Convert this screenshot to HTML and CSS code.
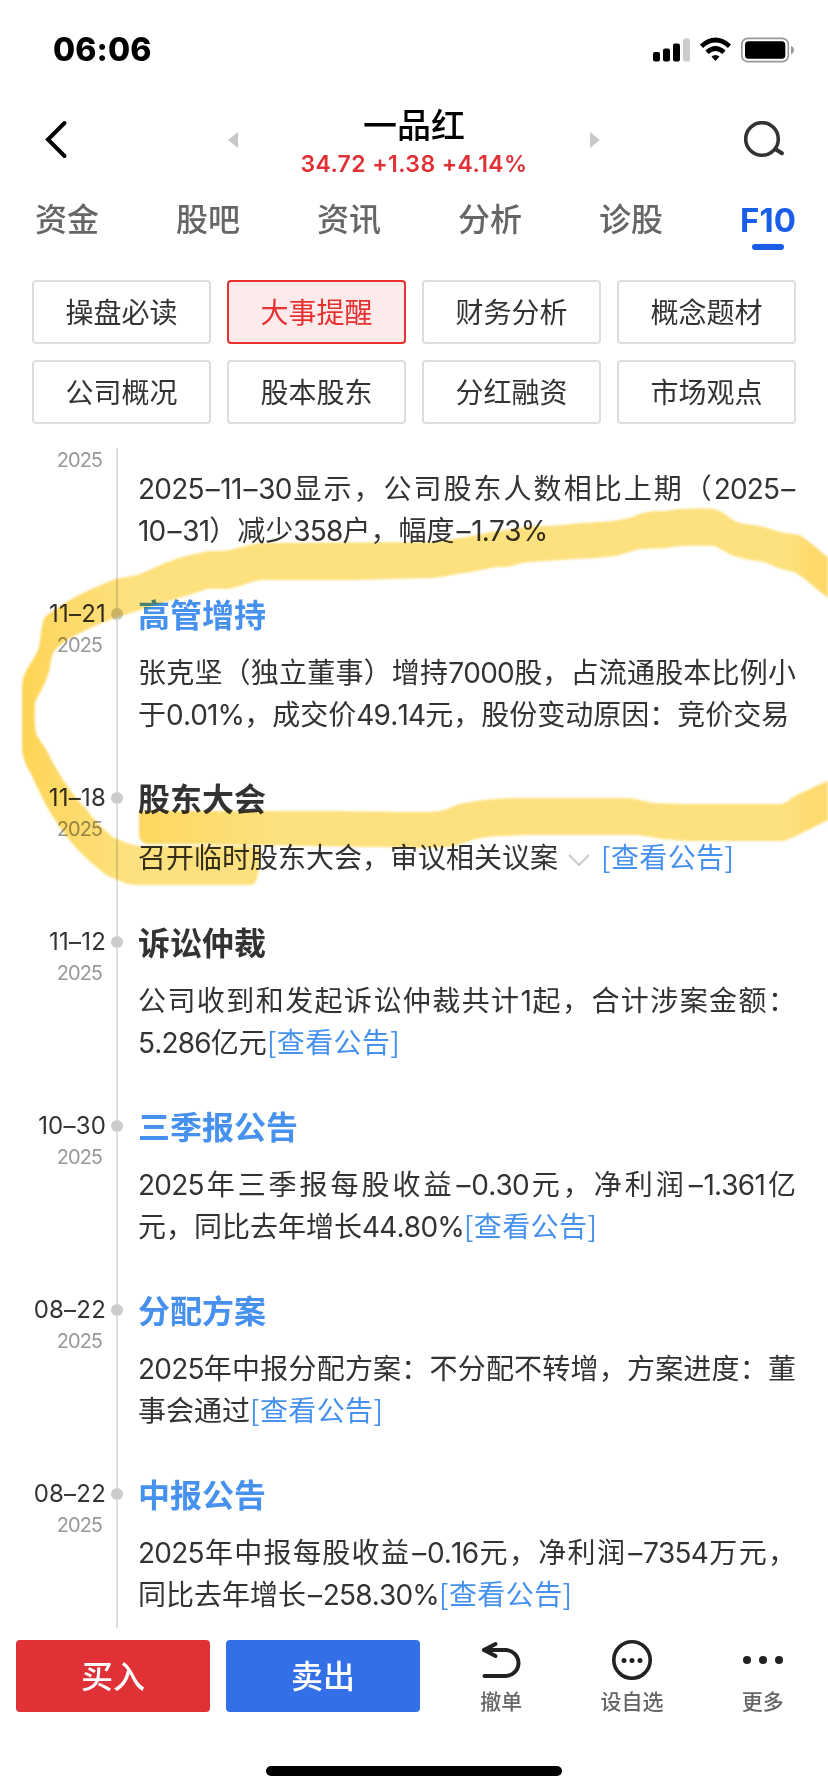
FILE: index.html
```
<!DOCTYPE html>
<html lang="zh-CN">
<head>
    <meta charset="UTF-8">
    <meta name="viewport" content="width=device-width, initial-scale=1.0">
    <title>一品红 - F10</title>
    <link rel="stylesheet" href="styles.css">
</head>
<body>
    <!-- Status bar -->
    <div class="status-bar">
        <div class="clock">06:06</div>
        <svg class="status-icons" width="142" height="26" viewBox="0 0 142 26">
            <rect x="0" y="15" width="7" height="9.5" rx="2"/>
            <rect x="10" y="11.500" width="7" height="13" rx="2"/>
            <rect x="20" y="6.500" width="7" height="18" rx="2"/>
            <rect x="30" y="1.500" width="7" height="23" rx="2" fill="#ccc"/>
            <path d="M48.500 9.200Q62.500 -3 76.500 9.200" fill="none" stroke="#000" stroke-width="4.800"/>
            <path d="M54 15.200Q62.500 7.600 71 15.200" fill="none" stroke="#000" stroke-width="4.800"/>
            <path d="M58.500 19.600Q62.500 16.400 66.500 19.600L62.500 24Z"/>
            <rect x="88.800" y="1.300" width="46.500" height="23.400" rx="6" fill="none" stroke="#999" stroke-width="1.700"/>
            <rect x="92" y="4.300" width="40.300" height="17.400" rx="3.500"/>
            <path d="M138 9q3 1 3 4t-3 4z" fill="#999"/>
        </svg>
    </div>

    <!-- Header -->
    <div class="header">
        <svg class="back" width="24" height="40" viewBox="0 0 24 40">
            <path d="M20.500 3L4 19.500L20.500 36" fill="none" stroke="#000" stroke-width="4" stroke-linecap="round"/>
        </svg>
        <svg width="10" height="16" viewBox="0 0 10 16"><path d="M10 0v16L0 8z" fill="#c8c8c8"/></svg>
        <div class="stock">
            <div class="stock-name">一品红</div>
            <div class="stock-price">34.72 +1.38 +4.14%</div>
        </div>
        <svg width="10" height="16" viewBox="0 0 10 16"><path d="M0 0v16l10-8z" fill="#c8c8c8"/></svg>
        <svg class="search" width="42" height="38" viewBox="0 0 42 38">
            <circle cx="18" cy="18" r="16.300" fill="none" stroke="#333" stroke-width="3.600"/>
            <path d="M32 28.500L38 32.300" stroke="#333" stroke-width="4" stroke-linecap="round"/>
        </svg>
    </div>

    <!-- Tabs -->
    <div class="tabs">
        <div class="tab">资金</div>
        <div class="tab">股吧</div>
        <div class="tab">资讯</div>
        <div class="tab">分析</div>
        <div class="tab">诊股</div>
        <div class="tab active">F10</div>
    </div>

    <!-- Section buttons -->
    <div class="sections">
        <div class="section">操盘必读</div>
        <div class="section active">大事提醒</div>
        <div class="section">财务分析</div>
        <div class="section">概念题材</div>
        <div class="section">公司概况</div>
        <div class="section">股本股东</div>
        <div class="section">分红融资</div>
        <div class="section">市场观点</div>
    </div>

    <!-- Timeline -->
    <div class="timeline">
        <div class="event event-cut">
            <div class="date"><div class="year">2025</div></div>
            <div class="content">
                <div class="line full"><span class="num">2025<i>–</i>11<i>–</i>30</span>显示，公司股东人数相比上期（<span class="num">2025<i>–</i></span></div>
                <div class="line"><span class="num">10<i>–</i>31</span>）减少<span class="num">358</span>户，幅度<span class="num"><i>–</i>1.73%</span></div>
            </div>
        </div>
        <div class="event">
            <div class="date"><div class="day">11–21</div><div class="year">2025</div></div>
            <div class="dot"></div>
            <div class="content">
                <div class="title blue">高管增持</div>
                <div class="line full">张克坚（独立董事）增持<span class="num">7000</span>股，占流通股本比例小</div>
                <div class="line">于<span class="num">0.01%</span>，成交价<span class="num">49.14</span>元，股份变动原因：竞价交易</div>
            </div>
        </div>
        <div class="event">
            <div class="date"><div class="day">11–18</div><div class="year">2025</div></div>
            <div class="dot"></div>
            <div class="content">
                <div class="title">股东大会</div>
                <div class="line tall">召开临时股东大会，审议相关议案<svg class="expand" width="24" height="14" viewBox="0 0 24 14"><path d="M2 2l10 10L22 2" fill="none" stroke="#ccc" stroke-width="2"/></svg><a class="link">[查看公告]</a></div>
            </div>
        </div>
        <div class="event">
            <div class="date"><div class="day">11–12</div><div class="year">2025</div></div>
            <div class="dot"></div>
            <div class="content">
                <div class="title">诉讼仲裁</div>
                <div class="line full">公司收到和发起诉讼仲裁共计<span class="num">1</span>起，合计涉案金额：</div>
                <div class="line"><span class="num">5.286</span>亿元<a class="link">[查看公告]</a></div>
            </div>
        </div>
        <div class="event">
            <div class="date"><div class="day">10–30</div><div class="year">2025</div></div>
            <div class="dot"></div>
            <div class="content">
                <div class="title blue">三季报公告</div>
                <div class="line full"><span class="num">2025</span>年三季报每股收益<span class="num"><i>–</i>0.30</span>元，净利润<span class="num"><i>–</i>1.361</span>亿</div>
                <div class="line">元，同比去年增长<span class="num">44.80%</span><a class="link">[查看公告]</a></div>
            </div>
        </div>
        <div class="event">
            <div class="date"><div class="day">08–22</div><div class="year">2025</div></div>
            <div class="dot"></div>
            <div class="content">
                <div class="title blue">分配方案</div>
                <div class="line full"><span class="num">2025</span>年中报分配方案：不分配不转增，方案进度：董</div>
                <div class="line">事会通过<a class="link">[查看公告]</a></div>
            </div>
        </div>
        <div class="event">
            <div class="date"><div class="day">08–22</div><div class="year">2025</div></div>
            <div class="dot"></div>
            <div class="content">
                <div class="title blue">中报公告</div>
                <div class="line full"><span class="num">2025</span>年中报每股收益<span class="num"><i>–</i>0.16</span>元，净利润<span class="num"><i>–</i>7354</span>万元，</div>
                <div class="line">同比去年增长<span class="num"><i>–</i>258.30%</span><a class="link">[查看公告]</a></div>
            </div>
        </div>
    </div>

    <!-- Bottom bar -->
    <div class="bottom-bar">
        <div class="trade buy">买入</div>
        <div class="trade sell">卖出</div>
        <div class="actions">
            <div class="action">
                <svg width="40" height="40" viewBox="0 0 40 40" fill="none" stroke="#222" stroke-width="4" stroke-linecap="round" stroke-linejoin="round">
                    <path d="M3 10H24.500A13 13 0 0 1 24.500 36H3.500"/>
                    <path d="M14.500 4L3 10L14.500 16"/>
                </svg>
                <span>撤单</span>
            </div>
            <div class="action">
                <svg width="40" height="40" viewBox="0 0 40 40" fill="#222">
                    <circle cx="20" cy="20" r="18.200" fill="none" stroke="#222" stroke-width="3.600"/>
                    <circle cx="12" cy="20.500" r="2.500"/><circle cx="20" cy="20.500" r="2.500"/><circle cx="28" cy="20.500" r="2.500"/>
                </svg>
                <span>设自选</span>
            </div>
            <div class="action">
                <svg width="40" height="40" viewBox="0 0 40 40" fill="#222">
                    <circle cx="4" cy="20" r="4"/><circle cx="20" cy="20" r="4"/><circle cx="36" cy="20" r="4"/>
                </svg>
                <span>更多</span>
            </div>
        </div>
    </div>
    <div class="home-indicator"></div>

    <!-- Marker drawn over the timeline -->
    <svg class="marker" width="828" height="1792" viewBox="0 0 828 1792">
        <defs>
            <linearGradient id="ring" gradientUnits="userSpaceOnUse" x1="0" y1="0" x2="828" y2="0">
                <stop offset="0.03" stop-color="#fdd555"/>
                <stop offset="0.07" stop-color="#fdd967"/>
                <stop offset="0.16" stop-color="#fde17f"/>
                <stop offset="0.95" stop-color="#fde17f"/>
                <stop offset="0.98" stop-color="#fdd96a"/>
            </linearGradient>
            <linearGradient id="bar" gradientUnits="userSpaceOnUse" x1="139" y1="0" x2="828" y2="0">
                <stop offset="0" stop-color="#fdd860"/>
                <stop offset="0.2" stop-color="#fde17f"/>
                <stop offset="0.94" stop-color="#fde17f"/>
                <stop offset="0.98" stop-color="#fddb6e"/>
            </linearGradient>
        </defs>
        <path fill="url(#ring)" d="M832 561C820 551 808 540 801 536C795 533 788 534 781 532L764 527C754 524 745 525 737 522C730 519 724 511 714 509C702 508 690 509 677 509C667 512 657 510 647 512C638 514 632 518 624 519C610 522 596 522 581 523C568 524 555 526 541 526C524 526 508 530 491 532C476 535 462 538 447 540C435 543 424 542 414 542L263 543C252 543 243 547 233 549C223 552 213 550 203 552C192 555 182 556 173 560C160 564 149 571 137 575L115 579C104 584 93 588 83 593C72 598 60 606 50 613C45 616 43 619 43 623C40 632 41 642 38 650C34 659 29 665 25 673C22 680 22 686 22 693V747C22 754 24 761 27 767C32 774 36 785 40 793C48 810 57 824 67 837C77 850 89 861 100 870C106 876 113 878 120 881C126 884 132 885 138 885H252C257 885 260 869 261 849C252 845 242 846 234 846H138C128 844 120 840 113 837C103 829 94 820 87 810C78 801 70 790 63 780C58 771 52 762 48 753C45 746 38 739 36 733C34 723 35 713 35 703C38 694 45 686 47 677C51 669 50 661 53 653C56 648 61 644 67 640C81 632 96 625 110 620C123 615 137 611 150 607C169 601 190 595 207 589C216 588 225 590 233 588C243 586 253 580 263 580H353L431 578C442 578 453 574 464 573C478 572 490 566 504 567C514 567 521 562 531 562L561 560C579 558 597 559 614 556C623 555 632 550 641 549L667 548C683 545 698 546 714 546C721 548 727 554 734 556C744 560 756 560 767 563C776 568 785 570 794 572C804 577 816 589 832 601Z"/>
        <path fill="url(#bar)" d="M139 811H333C360 811 387 812 414 812C424 812 435 812 444 810C450 808 457 804 464 803C480 800 497 798 514 798H627C636 798 645 802 654 803L687 804H782C788 802 794 795 801 793L832 779V818L794 837L784 841H687L661 839C651 837 641 835 631 835H521C507 836 494 836 481 838C469 840 459 846 447 847C418 849 389 847 367 847C294 846 220 844 147 844Q139 842 139 835Z"/>
    </svg>
</body>
</html>
```
FILE: styles.css
```
* {
    box-sizing: border-box;
}
body {
    position: relative;
    width: 828px;
    height: 1792px;
    margin: 0;
    overflow: hidden;
    background-color: #fff;
    color: #333;
    font-family: "Noto Sans CJK SC", sans-serif;
}
svg {
    display: block;
    flex: none;
}

/* Status bar */
.status-bar {
    display: flex;
    justify-content: space-between;
    align-items: center;
    height: 92px;
    padding: 7px 33px 0 53px;
    color: #000;
}
.clock {
    font-family: Inter, sans-serif;
    font-size: 32px;
    font-weight: 800;
    letter-spacing: 0.1px;
}

/* Header */
.header {
    display: grid;
    grid-template-columns: 228px 10px 352px 10px 228px;
    align-items: center;
    height: 96px;
}
.back {
    margin-left: 44px;
}
.search {
    margin-left: 144px;
}
.stock {
    text-align: center;
}
.stock-name {
    padding-top: 1px;
    color: #000;
    font-size: 34px;
    font-weight: 500;
    line-height: 44px;
}
.stock-price {
    padding-top: 2px;
    color: #e03236;
    font-family: Inter, sans-serif;
    font-size: 23px;
    font-weight: 600;
    letter-spacing: 0.4px;
    line-height: 32px;
}

/* Tabs */
.tabs {
    display: flex;
    justify-content: space-between;
    height: 62px;
    padding: 0 32px 0 35px;
}
.tab {
    color: #666;
    font-size: 32px;
    font-weight: 500;
    line-height: 59px;
}
.tab.active {
    position: relative;
    color: #1a5ee8;
    font-family: Inter, sans-serif;
    font-size: 33px;
    font-weight: 700;
    line-height: 64px;
}
.tab.active::after {
    content: "";
    position: absolute;
    left: 50%;
    bottom: 0;
    width: 32px;
    height: 6px;
    margin-left: -16px;
    border-radius: 3px;
    background-color: #1a5ee8;
}

/* Section buttons */
.sections {
    display: grid;
    grid-template-columns: repeat(4, 1fr);
    gap: 16px;
    padding: 30px 32px 24px;
}
.section {
    height: 64px;
    border: 2px solid #ddd;
    border-radius: 4px;
    font-size: 28px;
    line-height: 58px;
    text-align: center;
}
.section.active {
    border-color: #e93030;
    background-color: #fdeaeb;
    color: #e93030;
}

/* Timeline */
.timeline {
    height: 1180px;
    overflow: hidden;
    background: linear-gradient(#ddd, #ddd) 116px 0 / 2px 100% no-repeat;
}
.event {
    display: flex;
    padding-bottom: 41px;
}
.date {
    width: 106px;
    font-family: Inter, sans-serif;
    text-align: right;
}
.day {
    height: 44px;
    font-size: 24px;
    font-kerning: none;
    letter-spacing: 0.2px;
    line-height: 44px;
}
.year {
    padding-right: 4px;
    color: #999;
    font-size: 20px;
    letter-spacing: -1px;
    line-height: 18px;
}
.dot {
    width: 12px;
    height: 12px;
    margin: 16px 0 0 5px;
    border-radius: 50%;
    background-color: #ccc;
}
.content {
    width: 658px;
    margin: -1px 0 1px 15px;
}
.title {
    margin-bottom: 15px;
    font-size: 32px;
    font-weight: 700;
    line-height: 44px;
}
.title.blue {
    color: #4691ee;
}
.line {
    height: 42px;
    font-size: 28px;
    line-height: 42px;
    white-space: nowrap;
}
.line.full {
    text-align: justify;
    text-align-last: justify;
}
.line.tall {
    height: 44px;
    line-height: 44px;
}
.num {
    font-family: Inter, sans-serif;
    font-kerning: none;
    letter-spacing: -0.8px;
}
.num i {
    padding: 0 1.5px 0 2px;
    font-style: normal;
}
.link {
    color: #4691ee;
    letter-spacing: 0.4px;
}
.expand {
    display: inline-block;
    margin: 0 10px 0 9px;
    vertical-align: 1px;
}
.event-cut {
    padding-top: 3px;
}
.event-cut .content {
    margin: 15px 0 1px 32px;
}

/* Bottom bar */
.bottom-bar {
    display: flex;
    gap: 16px;
    padding: 12px 0 0 16px;
}
.trade {
    width: 194px;
    height: 72px;
    border-radius: 4px;
    color: #fff;
    font-size: 32px;
    font-weight: 500;
    line-height: 69px;
    text-align: center;
}
.buy {
    background-color: #e03136;
}
.sell {
    background-color: #336fe7;
}
.actions {
    display: flex;
    flex: 1;
}
.action {
    display: flex;
    flex: 1;
    flex-direction: column;
    align-items: center;
    color: #666;
    font-size: 21px;
    font-weight: 500;
}
.action span {
    margin-top: 5px;
    line-height: 30px;
}
.home-indicator {
    width: 296px;
    height: 10px;
    margin: 51px auto 0;
    border-radius: 5px;
    background-color: #000;
}

/* Marker */
.marker {
    position: absolute;
    top: 0;
    left: 0;
    filter: blur(1px);
    mix-blend-mode: multiply;
    pointer-events: none;
}
```
